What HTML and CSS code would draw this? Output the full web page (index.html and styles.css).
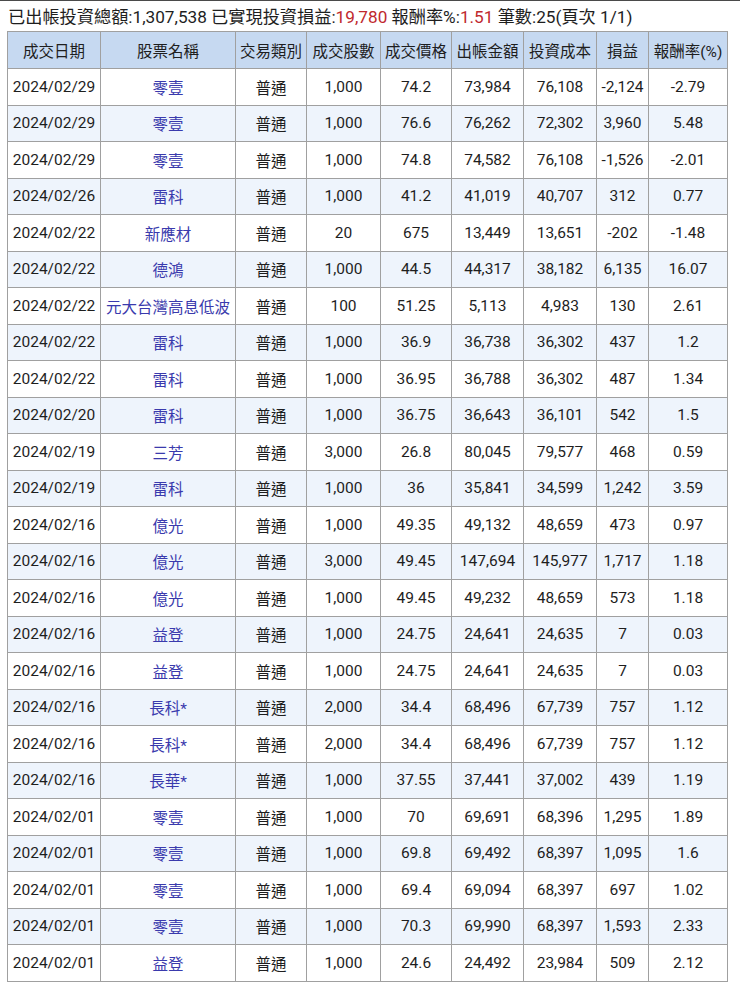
FILE: index.html
```html
<!DOCTYPE html>
<html lang="zh-Hant">
<head>
<meta charset="utf-8">
<link rel="stylesheet" href="styles.css">
</head>
<body>
<div class="summary">已出帳投資總額:1,307,538 已實現投資損益:<span class="red">19,780</span> 報酬率%:<span class="red">1.51</span> 筆數:25(頁次 1/1)</div>
<table class="grid">
<colgroup>
<col class="c1"><col class="c2"><col class="c3"><col class="c4"><col class="c5"><col class="c6"><col class="c7"><col class="c8"><col class="c9">
</colgroup>
<thead>
<tr><th>成交日期</th><th>股票名稱</th><th>交易類別</th><th>成交股數</th><th>成交價格</th><th>出帳金額</th><th>投資成本</th><th>損益</th><th>報酬率(%)</th></tr>
</thead>
<tbody>
<tr><td>2024/02/29</td><td><a>零壹</a></td><td>普通</td><td>1,000</td><td>74.2</td><td>73,984</td><td>76,108</td><td>-2,124</td><td>-2.79</td></tr>
<tr><td>2024/02/29</td><td><a>零壹</a></td><td>普通</td><td>1,000</td><td>76.6</td><td>76,262</td><td>72,302</td><td>3,960</td><td>5.48</td></tr>
<tr><td>2024/02/29</td><td><a>零壹</a></td><td>普通</td><td>1,000</td><td>74.8</td><td>74,582</td><td>76,108</td><td>-1,526</td><td>-2.01</td></tr>
<tr><td>2024/02/26</td><td><a>雷科</a></td><td>普通</td><td>1,000</td><td>41.2</td><td>41,019</td><td>40,707</td><td>312</td><td>0.77</td></tr>
<tr><td>2024/02/22</td><td><a>新應材</a></td><td>普通</td><td>20</td><td>675</td><td>13,449</td><td>13,651</td><td>-202</td><td>-1.48</td></tr>
<tr><td>2024/02/22</td><td><a>德鴻</a></td><td>普通</td><td>1,000</td><td>44.5</td><td>44,317</td><td>38,182</td><td>6,135</td><td>16.07</td></tr>
<tr><td>2024/02/22</td><td><a>元大台灣高息低波</a></td><td>普通</td><td>100</td><td>51.25</td><td>5,113</td><td>4,983</td><td>130</td><td>2.61</td></tr>
<tr><td>2024/02/22</td><td><a>雷科</a></td><td>普通</td><td>1,000</td><td>36.9</td><td>36,738</td><td>36,302</td><td>437</td><td>1.2</td></tr>
<tr><td>2024/02/22</td><td><a>雷科</a></td><td>普通</td><td>1,000</td><td>36.95</td><td>36,788</td><td>36,302</td><td>487</td><td>1.34</td></tr>
<tr><td>2024/02/20</td><td><a>雷科</a></td><td>普通</td><td>1,000</td><td>36.75</td><td>36,643</td><td>36,101</td><td>542</td><td>1.5</td></tr>
<tr><td>2024/02/19</td><td><a>三芳</a></td><td>普通</td><td>3,000</td><td>26.8</td><td>80,045</td><td>79,577</td><td>468</td><td>0.59</td></tr>
<tr><td>2024/02/19</td><td><a>雷科</a></td><td>普通</td><td>1,000</td><td>36</td><td>35,841</td><td>34,599</td><td>1,242</td><td>3.59</td></tr>
<tr><td>2024/02/16</td><td><a>億光</a></td><td>普通</td><td>1,000</td><td>49.35</td><td>49,132</td><td>48,659</td><td>473</td><td>0.97</td></tr>
<tr><td>2024/02/16</td><td><a>億光</a></td><td>普通</td><td>3,000</td><td>49.45</td><td>147,694</td><td>145,977</td><td>1,717</td><td>1.18</td></tr>
<tr><td>2024/02/16</td><td><a>億光</a></td><td>普通</td><td>1,000</td><td>49.45</td><td>49,232</td><td>48,659</td><td>573</td><td>1.18</td></tr>
<tr><td>2024/02/16</td><td><a>益登</a></td><td>普通</td><td>1,000</td><td>24.75</td><td>24,641</td><td>24,635</td><td>7</td><td>0.03</td></tr>
<tr><td>2024/02/16</td><td><a>益登</a></td><td>普通</td><td>1,000</td><td>24.75</td><td>24,641</td><td>24,635</td><td>7</td><td>0.03</td></tr>
<tr><td>2024/02/16</td><td><a>長科*</a></td><td>普通</td><td>2,000</td><td>34.4</td><td>68,496</td><td>67,739</td><td>757</td><td>1.12</td></tr>
<tr><td>2024/02/16</td><td><a>長科*</a></td><td>普通</td><td>2,000</td><td>34.4</td><td>68,496</td><td>67,739</td><td>757</td><td>1.12</td></tr>
<tr><td>2024/02/16</td><td><a>長華*</a></td><td>普通</td><td>1,000</td><td>37.55</td><td>37,441</td><td>37,002</td><td>439</td><td>1.19</td></tr>
<tr><td>2024/02/01</td><td><a>零壹</a></td><td>普通</td><td>1,000</td><td>70</td><td>69,691</td><td>68,396</td><td>1,295</td><td>1.89</td></tr>
<tr><td>2024/02/01</td><td><a>零壹</a></td><td>普通</td><td>1,000</td><td>69.8</td><td>69,492</td><td>68,397</td><td>1,095</td><td>1.6</td></tr>
<tr><td>2024/02/01</td><td><a>零壹</a></td><td>普通</td><td>1,000</td><td>69.4</td><td>69,094</td><td>68,397</td><td>697</td><td>1.02</td></tr>
<tr><td>2024/02/01</td><td><a>零壹</a></td><td>普通</td><td>1,000</td><td>70.3</td><td>69,990</td><td>68,397</td><td>1,593</td><td>2.33</td></tr>
<tr><td>2024/02/01</td><td><a>益登</a></td><td>普通</td><td>1,000</td><td>24.6</td><td>24,492</td><td>23,984</td><td>509</td><td>2.12</td></tr>
</tbody>
</table>
</body>
</html>
```
FILE: styles.css
```css
html, body {
  margin: 0;
  padding: 0;
  background: #fff;
}
body {
  border-top: 1px solid #4a4a4a;
  font-family: Roboto, "Noto Sans CJK TC", sans-serif;
  color: #1e1e1e;
}
.summary {
  height: 30px;
  line-height: 32px;
  padding-left: 8px;
  font-size: 17.2px;
  white-space: nowrap;
}
.red { color: #c0282d; }
.grid {
  margin-left: 7px;
  width: 721px;
  border-collapse: collapse;
  table-layout: fixed;
  font-size: 15.5px;
}
.c1 { width: 93px; }
.c2 { width: 135px; }
.c3 { width: 71px; }
.c4 { width: 74px; }
.c5 { width: 71px; }
.c6 { width: 72px; }
.c7 { width: 73px; }
.c8 { width: 52px; }
.c9 { width: 79px; }
.grid th, .grid td {
  border: 1px solid #a0a0a0;
  text-align: center;
  padding: 0;
  white-space: nowrap;
  overflow: hidden;
}
.grid th {
  background: #c6d9f1;
  font-weight: normal;
  height: 36px;
}
.grid td {
  height: 35.5px;
}
.grid tbody tr:nth-child(even) td { background: #eef4fc; }
.grid a { color: #3a3aad; text-decoration: none; }
```
